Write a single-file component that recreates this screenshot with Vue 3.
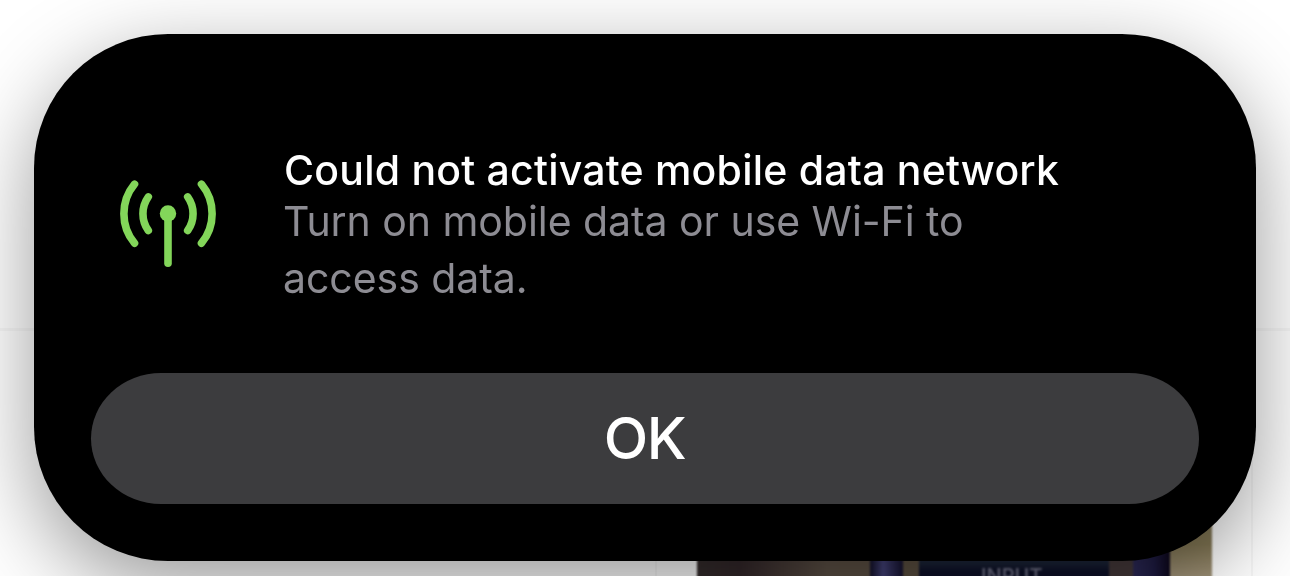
<template>
  <div class="screen">
    <!-- page behind the alert -->
    <div class="backdrop">
      <div class="rule"></div>
      <div class="tile">
        <div class="photo">
          <div class="stone"></div>
          <div class="strap"></div>
          <div class="gap"></div>
          <div class="panel"><span>INPUT</span></div>
          <div class="gap wide"></div>
          <div class="strap dark"></div>
          <div class="sand"></div>
        </div>
      </div>
    </div>

    <div class="alert-wrap">
      <div class="alert" role="alertdialog">
        <div class="message">
          <svg class="icon" viewBox="0 0 96 88" fill="none" stroke="currentColor" stroke-width="7.6" stroke-linecap="round">
            <path d="M14.5 4.2A46.3 46.3 0 0 0 14.5 63.2" />
            <path d="M28.3 16.9A29 29 0 0 0 28.3 50.5" />
            <path d="M67.7 16.9A29 29 0 0 1 67.7 50.5" />
            <path d="M81.5 4.2A46.3 46.3 0 0 1 81.5 63.2" />
            <path d="M48 34V83.2" />
            <circle cx="48" cy="33.5" r="8.2" fill="currentColor" stroke="none" />
          </svg>
          <div class="copy">
            <h1 class="title">{{ title }}</h1>
            <p class="text">{{ text }}</p>
          </div>
        </div>
        <button class="ok"><span>{{ action }}</span></button>
      </div>
    </div>
  </div>
</template>

<script setup>
import { ref } from 'vue'

const title = ref('Could not activate mobile data network')
const text = ref('Turn on mobile data or use Wi-Fi to access data.')
const action = ref('OK')
</script>

<style>
body { margin: 0; background: #fff; }
</style>

<style scoped>
.screen { position: relative; width: 1290px; height: 576px; overflow: hidden; background: #fff; font-family: Inter, "Liberation Sans", sans-serif; }

.backdrop { position: absolute; inset: 0; display: flex; flex-direction: column; }
.rule { flex: none; height: 3px; margin-top: 328px; background: #f8f8f8; }
.tile { flex: 1; box-sizing: border-box; width: 598px; margin-left: 655px; padding: 0 39px 0 40px; border: solid #f7f7f7; border-width: 0 2px; display: flex; }
.photo { display: flex; width: 100%; margin-top: 150px; filter: blur(1px); }
.stone { width: 173px; background: linear-gradient(90deg, #352d2d, #33272a 25%, #5c5045 75%, #5c5044); }
.strap { width: 33px; background: linear-gradient(90deg, #131129, #44437a 40%, #15122f); }
.gap { width: 16px; background: #5b4f40; }
.gap.wide { width: 24px; background: #45393a; }
.panel { width: 190px; box-sizing: border-box; padding: 85px 0 0 62px; background: linear-gradient(#1b2438 82px, #0e1129 90px); color: #6b6c82; font-size: 20px; font-weight: 600; line-height: 20px; }
.strap.dark { width: 37px; background: linear-gradient(90deg, #2d2a58, #201d45 55%, #0d071c); }
.sand { flex: 1; background: linear-gradient(#7d7359, #857955 60%, #a89a82); }

.alert-wrap { position: relative; padding: 34px; filter: drop-shadow(0 26px 43px rgba(0, 0, 0, .4)); }
.alert { box-sizing: border-box; width: 1222px; height: 527px; padding: 112px 57px 57px; display: flex; flex-direction: column; justify-content: space-between; background: #000; border-radius: 134px; }
.message { display: flex; padding-left: 29px; }
.icon { width: 96px; height: 88px; margin-top: 34px; flex: none; color: #83d65a; }
.copy { margin-left: 67px; width: 800px; }
.title { margin: 0; padding: 1px 0 0 1px; color: #fff; font-size: 41px; font-weight: 500; line-height: 47px; letter-spacing: 0.22px; white-space: nowrap; }
.text { margin: -1px 0 0; width: 740px; color: #8d8c93; font-size: 41px; font-weight: 400; line-height: 57px; letter-spacing: -0.05px; }
.ok { display: flex; align-items: center; justify-content: center; height: 131px; padding: 0 1px 2px 0; border: 0; border-radius: 70px / 65.5px; background: #3c3c3e; color: #fff; font-family: inherit; font-size: 58px; font-weight: 500; letter-spacing: -1.3px; cursor: pointer; }
</style>
